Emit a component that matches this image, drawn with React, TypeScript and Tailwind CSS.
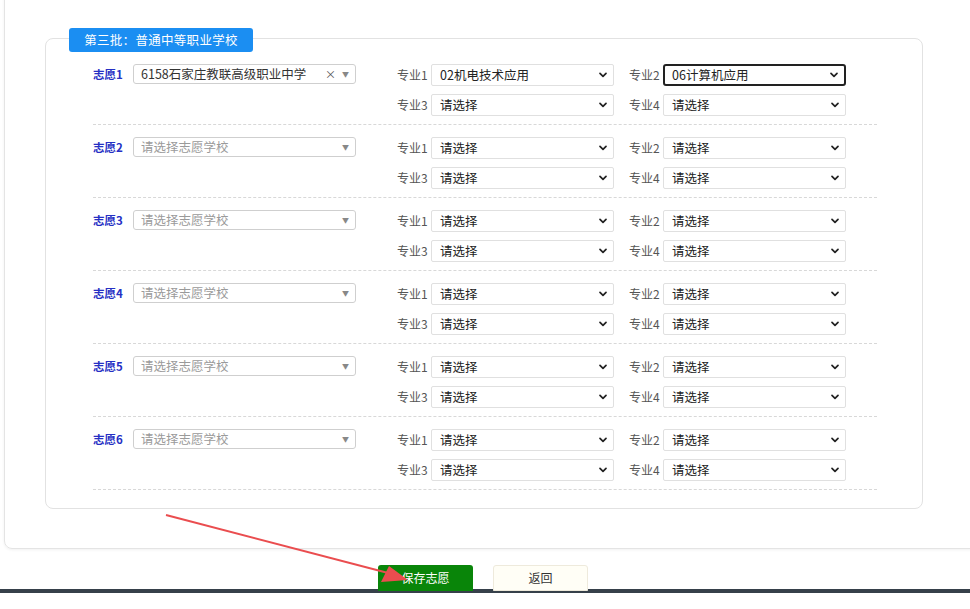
import React from 'react';

const FONT = '[font-family:"Noto_Sans_CJK_SC","Microsoft_YaHei",sans-serif]';

const Chevron: React.FC = () => (
  <svg width="8" height="6" viewBox="0 0 8 6" className="shrink-0">
    <path d="M1 1.3 L4 4.3 L7 1.3" fill="none" stroke="#222" strokeWidth="1.7" strokeLinecap="round" strokeLinejoin="round" />
  </svg>
);

const MajorSelect: React.FC<{ label: string; value?: string; focused?: boolean; gap?: boolean }> = ({ label, value, focused, gap }) => (
  <div className={`flex items-center ${gap ? 'ml-[15px]' : ''}`}>
    <span className="w-[34px] text-[12px] text-[#555]">{label}</span>
    <div
      className={`flex h-[22px] w-[183px] items-center justify-between bg-white pr-[6px] ${
        focused ? 'rounded-[3px] border-2 border-[#222] pl-[7px]' : 'rounded-[2px] border border-[#e0e0e0] pl-[8px]'
      }`}
    >
      <span className="text-[12.5px] text-[#222]">{value ?? '请选择'}</span>
      <Chevron />
    </div>
  </div>
);

type Wish = { n: number; school?: string; m1?: string; m2?: string };

const wishes: Wish[] = [
  { n: 1, school: '6158石家庄教联高级职业中学', m1: '02机电技术应用', m2: '06计算机应用' },
  { n: 2 },
  { n: 3 },
  { n: 4 },
  { n: 5 },
  { n: 6 },
];

const WishGroup: React.FC<{ w: Wish }> = ({ w }) => (
  <div className="flex border-b border-dashed border-[#d8d8d8] pt-[12px] pb-[8px]">
    <span className="w-[40px] pt-[2px] text-[11.5px] font-bold text-[#2630c4]">志愿{w.n}</span>
    <div className="flex h-[20px] w-[223px] items-center justify-between rounded-[3px] border border-[#cfcfcf] bg-white pl-[7px] pr-[6px]">
      {w.school ? (
        <span className="text-[12.5px] text-[#333]">{w.school}</span>
      ) : (
        <span className="text-[12.5px] text-[#9a9a9a]">请选择志愿学校</span>
      )}
      <span className="flex items-center gap-[6px] text-[#888]">
        {w.school && <span className="text-[11px] leading-none text-[#555]">×</span>}
        <span className="text-[7px] leading-none">▼</span>
      </span>
    </div>
    <div className="ml-[41px] flex flex-col gap-[8px]">
      <div className="flex">
        <MajorSelect label="专业1" value={w.m1} />
        <MajorSelect label="专业2" value={w.m2} focused={w.n === 1} gap />
      </div>
      <div className="flex">
        <MajorSelect label="专业3" />
        <MajorSelect label="专业4" gap />
      </div>
    </div>
  </div>
);

const App: React.FC = () => {
  return (
    <div className={`relative h-[609px] w-[970px] overflow-hidden bg-white ${FONT}`}>
      <div className="-mt-[10px] ml-[4px] h-[559px] w-[990px] rounded-b-[8px] border border-[#e4e4e4] pt-[47px] shadow-[0_1px_3px_rgba(0,0,0,0.06)]">
        <div className="ml-[40px] w-[878px] rounded-[8px] border border-[#e2e2e2] pb-[18px]">
          <div className="-mt-[11px] ml-[23px] flex h-[24px] w-[184px] items-center justify-center rounded-[3px] bg-[#1b8ef2] text-[12.5px] tracking-[0.3px] text-white">
            第三批：普通中等职业学校
          </div>
          <div className="ml-[47px] mr-[45px]">
            {wishes.map((w) => (
              <WishGroup key={w.n} w={w} />
            ))}
          </div>
        </div>
      </div>

      <div className="mt-[16px] flex h-[24px] items-start gap-[20px] pl-[378px]">
        <button className="h-[26px] w-[95px] rounded-t-[3px] bg-[#098509] text-[12px] text-white">保存志愿</button>
        <button className="h-[26px] w-[95px] rounded-t-[3px] border border-[#eeeadc] bg-[#fffef6] text-[12px] text-[#333]">返回</button>
      </div>
      <div className="h-[4px] w-full bg-[#36404a]" />

      <svg className="pointer-events-none absolute left-0 top-0" width="970" height="609">
        <line x1="166" y1="515" x2="392" y2="574" stroke="#ea4d4f" strokeWidth="2" />
        <polygon points="408,580 381,582 389,566" fill="#ea4d4f" />
      </svg>
    </div>
  );
};

export default App;
